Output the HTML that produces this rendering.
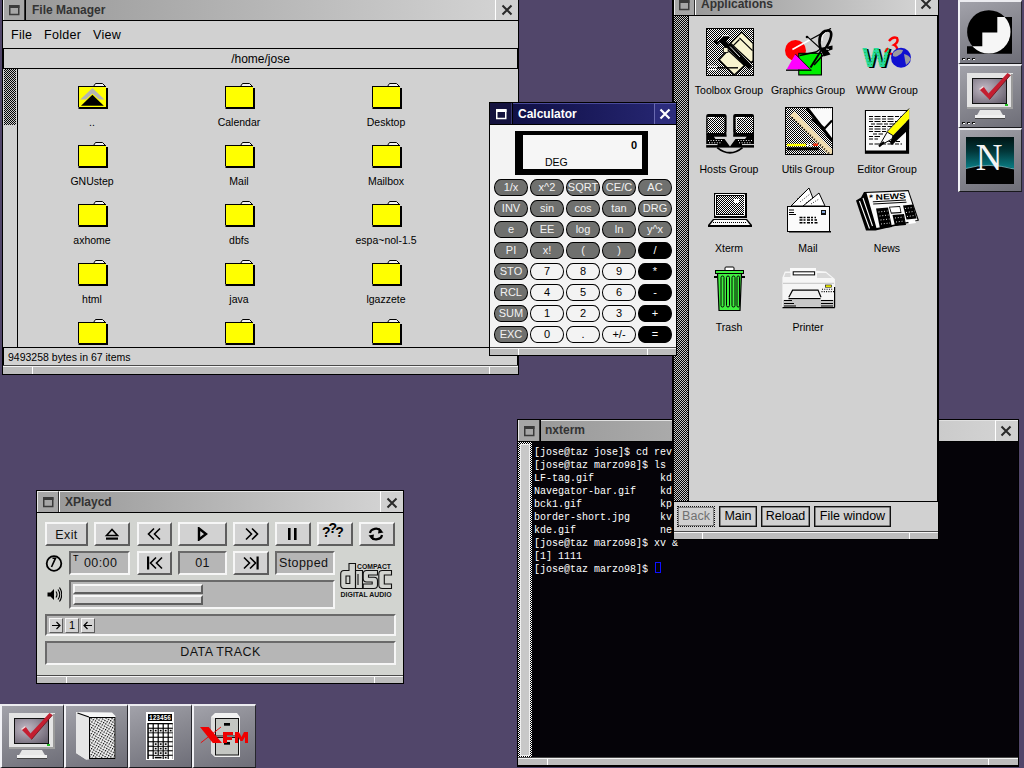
<!DOCTYPE html>
<html><head><meta charset="utf-8">
<style>
*{margin:0;padding:0;box-sizing:border-box}
html,body{width:1024px;height:768px;overflow:hidden}
body{position:relative;background:#51466a;font-family:"Liberation Sans",sans-serif;color:#000}
.a{position:absolute}
.blk{background:#000}
.tb{background:linear-gradient(90deg,#9a9a9a,#d2d2d2)}
.tbtn{background:#a6a6a6;border-left:1px solid #e8e8e8;border-right:1px solid #303030}
.ttl{font-weight:bold;font-size:12px;color:#333;white-space:nowrap;line-height:1}
.winico{border:1.5px solid #3a3a3a;border-top-width:3px}
.cls{background:#d0d0d0;border-left:1px solid #fff}
.chk{background:repeating-conic-gradient(#000 0 25%,#c8c8c8 0 50%) 0 0/2px 2px}
.lbl{font-size:10.5px;white-space:nowrap;line-height:1;text-align:center}
.cb{width:34px;height:17px;border:1px solid #000;border-radius:7px/8.5px;font-size:11px;line-height:15px;text-align:center;white-space:nowrap}
.abtn{height:21px;border:1px solid #111;box-shadow:inset 0 0 0 0.5px #333;font-size:12.5px;line-height:19px;text-align:center;white-space:nowrap;background:#d1d1d1}
.rz{background:#d2d2d2;border:2px solid;border-color:#f6f6f6 #5e5e5e #5e5e5e #f6f6f6}
.sk{background:#b6b6b6;border:2px solid;border-color:#6a6a6a #f6f6f6 #f6f6f6 #6a6a6a}
.cdt{font-size:12.5px;line-height:1;letter-spacing:0.4px;white-space:nowrap;color:#111}
.tile{width:64px;height:64px;background:linear-gradient(160deg,#a2a2aa,#8a8a92 45%,#6e6e78);border-top:2px solid #ececf0;border-left:2px solid #f2f2f6;border-right:1px solid #26262c;border-bottom:1px solid #18181c}
.rsz{background:#bdbdbd;border-top:1px solid #f4f4f4;box-shadow:0 -1px 0 #4a4a4a}
</style></head><body>

<!-- ============ FILE MANAGER ============ -->
<div class="a blk" style="left:2px;top:-1px;width:517px;height:376px"></div>
<div class="a tbtn" style="left:3px;top:0;width:22px;height:20px"></div>
<svg class="a" style="left:9px;top:5px" width="11" height="11"><rect x="0.75" y="1" width="9" height="8.5" fill="none" stroke="#3a3a3a" stroke-width="1.5"/><rect x="0" y="0" width="10.5" height="3" fill="#3a3a3a"/></svg>
<div class="a tb" style="left:26px;top:0;width:469px;height:20px"></div>
<div class="a ttl" style="left:32px;top:4px">File Manager</div>
<div class="a cls" style="left:495px;top:0;width:23px;height:20px"></div>
<div class="a" style="left:501px;top:2px;width:12px;height:12px">
 <svg width="12" height="12"><path d="M1.5 1.5L10.5 10.5M10.5 1.5L1.5 10.5" stroke="#2a2a2a" stroke-width="2"/></svg></div>
<!-- menu -->
<div class="a" style="left:3px;top:21px;width:515px;height:27px;background:#d1d1d1"></div>
<div class="a" style="left:11px;top:29px;font-size:12.5px;letter-spacing:0.3px;line-height:1">File</div>
<div class="a" style="left:44px;top:29px;font-size:12.5px;letter-spacing:0.3px;line-height:1">Folder</div>
<div class="a" style="left:93px;top:29px;font-size:12.5px;letter-spacing:0.3px;line-height:1">View</div>
<!-- path -->
<div class="a" style="left:4px;top:49px;width:513px;height:19px;background:#d1d1d1"></div>
<div class="a" style="left:3px;top:53px;width:515px;text-align:center;font-size:12px;line-height:1">/home/jose</div>
<!-- content -->
<div class="a" style="left:3px;top:69px;width:14px;height:278px;background:#d0d0d0"></div>
<div class="a chk" style="left:4px;top:69px;width:12px;height:56px"></div>
<div class="a" style="left:18px;top:69px;width:500px;height:278px;background:#d1d1d1"></div>
<svg class="a" style="left:78px;top:83px" width="31" height="27"><path d="M15.5 3.5L17.5 0.5H24.5L27.5 3.5Z" fill="#f4f4f4" stroke="#000"/><rect x="0" y="3" width="28" height="21" fill="#000"/><rect x="1" y="4" width="27" height="20" fill="#ff0"/><rect x="28" y="5" width="2" height="21" fill="#000"/><rect x="0.5" y="24" width="29.5" height="2" fill="#000"/><path d="M2.3 16.5L14.4 5L26.5 16.5H21L14.4 10.6L7.8 16.5Z" fill="#b4b4b4"/><path d="M3 22.7L14.4 11.8L25.8 22.7Z" fill="#000"/></svg>
<div class="a lbl" style="left:42px;top:117px;width:100px">..</div>
<svg class="a" style="left:225px;top:83px" width="31" height="27"><path d="M15.5 3.5L17.5 0.5H24.5L27.5 3.5Z" fill="#f4f4f4" stroke="#000"/><rect x="0" y="3" width="28" height="21" fill="#000"/><rect x="1" y="4" width="27" height="20" fill="#ff0"/><rect x="28" y="5" width="2" height="21" fill="#000"/><rect x="0.5" y="24" width="29.5" height="2" fill="#000"/></svg>
<div class="a lbl" style="left:189px;top:117px;width:100px">Calendar</div>
<svg class="a" style="left:372px;top:83px" width="31" height="27"><path d="M15.5 3.5L17.5 0.5H24.5L27.5 3.5Z" fill="#f4f4f4" stroke="#000"/><rect x="0" y="3" width="28" height="21" fill="#000"/><rect x="1" y="4" width="27" height="20" fill="#ff0"/><rect x="28" y="5" width="2" height="21" fill="#000"/><rect x="0.5" y="24" width="29.5" height="2" fill="#000"/></svg>
<div class="a lbl" style="left:336px;top:117px;width:100px">Desktop</div>
<svg class="a" style="left:78px;top:142px" width="31" height="27"><path d="M15.5 3.5L17.5 0.5H24.5L27.5 3.5Z" fill="#f4f4f4" stroke="#000"/><rect x="0" y="3" width="28" height="21" fill="#000"/><rect x="1" y="4" width="27" height="20" fill="#ff0"/><rect x="28" y="5" width="2" height="21" fill="#000"/><rect x="0.5" y="24" width="29.5" height="2" fill="#000"/></svg>
<div class="a lbl" style="left:42px;top:176px;width:100px">GNUstep</div>
<svg class="a" style="left:225px;top:142px" width="31" height="27"><path d="M15.5 3.5L17.5 0.5H24.5L27.5 3.5Z" fill="#f4f4f4" stroke="#000"/><rect x="0" y="3" width="28" height="21" fill="#000"/><rect x="1" y="4" width="27" height="20" fill="#ff0"/><rect x="28" y="5" width="2" height="21" fill="#000"/><rect x="0.5" y="24" width="29.5" height="2" fill="#000"/></svg>
<div class="a lbl" style="left:189px;top:176px;width:100px">Mail</div>
<svg class="a" style="left:372px;top:142px" width="31" height="27"><path d="M15.5 3.5L17.5 0.5H24.5L27.5 3.5Z" fill="#f4f4f4" stroke="#000"/><rect x="0" y="3" width="28" height="21" fill="#000"/><rect x="1" y="4" width="27" height="20" fill="#ff0"/><rect x="28" y="5" width="2" height="21" fill="#000"/><rect x="0.5" y="24" width="29.5" height="2" fill="#000"/></svg>
<div class="a lbl" style="left:336px;top:176px;width:100px">Mailbox</div>
<svg class="a" style="left:78px;top:201px" width="31" height="27"><path d="M15.5 3.5L17.5 0.5H24.5L27.5 3.5Z" fill="#f4f4f4" stroke="#000"/><rect x="0" y="3" width="28" height="21" fill="#000"/><rect x="1" y="4" width="27" height="20" fill="#ff0"/><rect x="28" y="5" width="2" height="21" fill="#000"/><rect x="0.5" y="24" width="29.5" height="2" fill="#000"/></svg>
<div class="a lbl" style="left:42px;top:235px;width:100px">axhome</div>
<svg class="a" style="left:225px;top:201px" width="31" height="27"><path d="M15.5 3.5L17.5 0.5H24.5L27.5 3.5Z" fill="#f4f4f4" stroke="#000"/><rect x="0" y="3" width="28" height="21" fill="#000"/><rect x="1" y="4" width="27" height="20" fill="#ff0"/><rect x="28" y="5" width="2" height="21" fill="#000"/><rect x="0.5" y="24" width="29.5" height="2" fill="#000"/></svg>
<div class="a lbl" style="left:189px;top:235px;width:100px">dbfs</div>
<svg class="a" style="left:372px;top:201px" width="31" height="27"><path d="M15.5 3.5L17.5 0.5H24.5L27.5 3.5Z" fill="#f4f4f4" stroke="#000"/><rect x="0" y="3" width="28" height="21" fill="#000"/><rect x="1" y="4" width="27" height="20" fill="#ff0"/><rect x="28" y="5" width="2" height="21" fill="#000"/><rect x="0.5" y="24" width="29.5" height="2" fill="#000"/></svg>
<div class="a lbl" style="left:336px;top:235px;width:100px">espa~nol-1.5</div>
<svg class="a" style="left:78px;top:260px" width="31" height="27"><path d="M15.5 3.5L17.5 0.5H24.5L27.5 3.5Z" fill="#f4f4f4" stroke="#000"/><rect x="0" y="3" width="28" height="21" fill="#000"/><rect x="1" y="4" width="27" height="20" fill="#ff0"/><rect x="28" y="5" width="2" height="21" fill="#000"/><rect x="0.5" y="24" width="29.5" height="2" fill="#000"/></svg>
<div class="a lbl" style="left:42px;top:294px;width:100px">html</div>
<svg class="a" style="left:225px;top:260px" width="31" height="27"><path d="M15.5 3.5L17.5 0.5H24.5L27.5 3.5Z" fill="#f4f4f4" stroke="#000"/><rect x="0" y="3" width="28" height="21" fill="#000"/><rect x="1" y="4" width="27" height="20" fill="#ff0"/><rect x="28" y="5" width="2" height="21" fill="#000"/><rect x="0.5" y="24" width="29.5" height="2" fill="#000"/></svg>
<div class="a lbl" style="left:189px;top:294px;width:100px">java</div>
<svg class="a" style="left:372px;top:260px" width="31" height="27"><path d="M15.5 3.5L17.5 0.5H24.5L27.5 3.5Z" fill="#f4f4f4" stroke="#000"/><rect x="0" y="3" width="28" height="21" fill="#000"/><rect x="1" y="4" width="27" height="20" fill="#ff0"/><rect x="28" y="5" width="2" height="21" fill="#000"/><rect x="0.5" y="24" width="29.5" height="2" fill="#000"/></svg>
<div class="a lbl" style="left:336px;top:294px;width:100px">lgazzete</div>
<svg class="a" style="left:78px;top:319px" width="31" height="27"><path d="M15.5 3.5L17.5 0.5H24.5L27.5 3.5Z" fill="#f4f4f4" stroke="#000"/><rect x="0" y="3" width="28" height="21" fill="#000"/><rect x="1" y="4" width="27" height="20" fill="#ff0"/><rect x="28" y="5" width="2" height="21" fill="#000"/><rect x="0.5" y="24" width="29.5" height="2" fill="#000"/></svg>
<svg class="a" style="left:225px;top:319px" width="31" height="27"><path d="M15.5 3.5L17.5 0.5H24.5L27.5 3.5Z" fill="#f4f4f4" stroke="#000"/><rect x="0" y="3" width="28" height="21" fill="#000"/><rect x="1" y="4" width="27" height="20" fill="#ff0"/><rect x="28" y="5" width="2" height="21" fill="#000"/><rect x="0.5" y="24" width="29.5" height="2" fill="#000"/></svg>
<svg class="a" style="left:372px;top:319px" width="31" height="27"><path d="M15.5 3.5L17.5 0.5H24.5L27.5 3.5Z" fill="#f4f4f4" stroke="#000"/><rect x="0" y="3" width="28" height="21" fill="#000"/><rect x="1" y="4" width="27" height="20" fill="#ff0"/><rect x="28" y="5" width="2" height="21" fill="#000"/><rect x="0.5" y="24" width="29.5" height="2" fill="#000"/></svg>
<!-- status -->
<div class="a" style="left:4px;top:348px;width:513px;height:16.5px;background:#d1d1d1"></div>
<div class="a" style="left:8px;top:352px;font-size:10.5px;line-height:1">9493258 bytes in 67 items</div>
<div class="a rsz" style="left:3px;top:366px;width:515px;height:8px"></div>
<div class="a" style="left:32px;top:367px;width:1px;height:7px;background:#fff"></div>
<div class="a" style="left:489px;top:367px;width:1px;height:7px;background:#fff"></div>

<div class="a blk" style="left:517px;top:419px;width:502px;height:348px"></div>
<div class="a tbtn" style="left:518px;top:420px;width:22px;height:21px"></div>
<svg class="a" style="left:524px;top:426px" width="11" height="11"><rect x="0.75" y="1" width="9" height="8.5" fill="none" stroke="#3a3a3a" stroke-width="1.5"/><rect x="0" y="0" width="10.5" height="3" fill="#3a3a3a"/></svg>
<div class="a tb" style="left:541px;top:420px;width:454px;height:21px;border-top:1px solid #e0e0e0"></div>
<div class="a ttl" style="left:545px;top:424px">nxterm</div>
<div class="a cls" style="left:995px;top:420px;width:23px;height:21px;border-top:1px solid #f0f0f0"></div>
<svg class="a" style="left:1000px;top:425px" width="12" height="12"><path d="M1.5 1.5L10.5 10.5M10.5 1.5L1.5 10.5" stroke="#2a2a2a" stroke-width="2"/></svg>
<div class="a" style="left:532px;top:442px;width:486px;height:316px;background:#050308"></div>
<div class="a" style="left:518px;top:442px;width:14px;height:316px;background:repeating-conic-gradient(#000 0 25%,#fff 0 50%) 0 0/2px 2px"></div>
<div class="a" style="left:521px;top:445px;width:8px;height:310px;background:#c8c8c8;box-shadow:0 0 0 1px #f0f0f0"></div>
<pre class="a" style="left:534px;top:446px;font-family:'Liberation Mono',monospace;font-size:10px;line-height:13px;color:#fff;margin:0">[jose@taz jose]$ cd revista
[jose@taz marzo98]$ ls
LF-tag.gif           kde
Navegator-bar.gif    kde
bck1.gif             kpa
border-short.jpg     kvi
kde.gif              net
[jose@taz marzo98]$ xv &
[1] 1111
[jose@taz marzo98]$ </pre>
<div class="a" style="left:655px;top:562px;width:6px;height:11px;border:1px solid #1010ff"></div>
<div class="a rsz" style="left:518px;top:758px;width:500px;height:7px"></div>
<div class="a" style="left:547px;top:759px;width:1px;height:6px;background:#fff"></div>
<div class="a" style="left:988px;top:759px;width:1px;height:6px;background:#fff"></div>
<div class="a blk" style="left:672px;top:-6px;width:267px;height:546px"></div>
<div class="a tbtn" style="left:674px;top:-5px;width:21px;height:20px"></div>
<svg class="a" style="left:679px;top:0px" width="11" height="11"><rect x="0.75" y="1" width="9" height="8.5" fill="none" stroke="#3a3a3a" stroke-width="1.5"/><rect x="0" y="0" width="10.5" height="3" fill="#3a3a3a"/></svg>
<div class="a tb" style="left:695px;top:-5px;width:221px;height:20px;border-left:1px solid #fff"></div>
<div class="a ttl" style="left:701px;top:-2px">Applications</div>
<div class="a cls" style="left:915px;top:-5px;width:23px;height:20px"></div>
<svg class="a" style="left:920px;top:-2px" width="12" height="12"><path d="M1.5 1.5L10.5 10.5M10.5 1.5L1.5 10.5" stroke="#2a2a2a" stroke-width="2"/></svg>
<div class="a chk" style="left:674px;top:16px;width:14px;height:485px"></div>
<div class="a" style="left:689px;top:16px;width:248px;height:485px;background:#d1d1d1"></div>
<svg class="a" style="left:706px;top:28px" width="48" height="48"><defs><pattern id="c1" width="2" height="2" patternUnits="userSpaceOnUse"><rect width="2" height="2" fill="#fff"/><rect width="1" height="1" fill="#000"/><rect x="1" y="1" width="1" height="1" fill="#000"/></pattern></defs><rect width="48" height="48" fill="#000"/><rect x="1" y="1" width="46" height="46" fill="url(#c1)"/><path d="M35.6 3.2L47 14.6V34L45 35.5L23.5 15.3Z" fill="#000"/><path d="M35.6 5L46.5 15.8V32.5L45 33.5L25.5 15.3Z" fill="#f8f4d0"/><path d="M33.4 9.9L46.5 22.6M27 17.9L33.4 11.5" stroke="#000" stroke-width="1.3" fill="none"/><path d="M12 31.8L22.1 21.3L39.5 37.6L28.3 48Z" fill="#000"/><path d="M14 31.8L22.1 23.3L37.5 37.6L28.3 46Z" fill="#f8f4d0"/><path d="M17.4 19.4H22.1V24.5H17.4Z" fill="#f8f4d0" stroke="#000" stroke-width="0.8"/><path d="M21.7 17.2L44.4 39.8" stroke="#000" stroke-width="4.6"/><path d="M24 18.5L34 29" stroke="#fff" stroke-width="0.9"/><path d="M7 13.5L11 17L14 14L20 20L24 17L20 13L24 9.5L22.5 8H16L10 12Z" fill="#000"/><path d="M11.5 13.5L17.4 7.7H22.5" stroke="#fff" stroke-width="1" fill="none"/><path d="M2 38.3H11M2 41.6H11" stroke="#fff" stroke-width="1.1"/><path d="M11 39.8H32" stroke="#000" stroke-width="1.4"/></svg>
<svg class="a" style="left:785px;top:28px" width="50" height="50"><circle cx="10.5" cy="22.4" r="10.5" fill="#f00"/><rect x="13.2" y="24.8" width="23.8" height="22.7" fill="#000"/><rect x="14.3" y="25.9" width="21.6" height="20.5" fill="#00f000"/><path d="M1.6 41.6L10.3 26L25.7 41.6Z" fill="#f0f"/><path d="M1 42.2H26.5" stroke="#000" stroke-width="1.3"/><path d="M10.3 26L25.7 41.6" stroke="#000" stroke-width="0.9"/><path d="M14.7 27.6L31 24L37 20" stroke="#000" stroke-width="1.5" fill="none"/><path d="M7.4 21.5L25 11.7" stroke="#fff" stroke-width="1.6"/><path d="M25 11.7L46 0.4" stroke="#000" stroke-width="1.3"/><circle cx="22" cy="9" r="1.3" fill="#000"/><path d="M22 8.4L36.5 21.5" stroke="#000" stroke-width="1.1"/><path d="M35.5 21Q32 7 40 3Q47.5 1 46 8.5Q45 14 39.5 22" stroke="#000" stroke-width="2.6" fill="none"/><path d="M37 13Q37 6 41 4.5" stroke="#fff" stroke-width="0.9" fill="none"/><path d="M35 20L47.5 17.5V21.5L43 23L45.5 26.5L38.5 28.5Z" fill="#000"/><path d="M41 21L44 21.5" stroke="#fff" stroke-width="0.8"/><path d="M36.5 22L25.5 39.5" stroke="#000" stroke-width="2"/><path d="M38 27L29 37" stroke="#000" stroke-width="1.6"/></svg>
<svg class="a" style="left:858px;top:34px" width="56" height="38"><defs><pattern id="wd" width="3" height="3" patternUnits="userSpaceOnUse"><rect width="3" height="3" fill="#28d8a0"/><rect width="1" height="1" fill="#10c030"/></pattern></defs><text x="5.5" y="34.5" font-family="Liberation Sans" font-weight="bold" font-size="27" fill="#000" transform="scale(1.08,1)">W</text><text x="4" y="33.5" font-family="Liberation Sans" font-weight="bold" font-size="27" fill="url(#wd)" transform="scale(1.08,1)">W</text><path d="M31 7Q35 2 39 4Q41 8 36 11Q41 13 38 19Q35 22 32 19" stroke="#f00" stroke-width="2.4" fill="none"/><path d="M27 18L30 14" stroke="#f00" stroke-width="2"/><circle cx="43" cy="23.8" r="10" fill="#1010d0"/><path d="M35 19Q39 14 45 16Q44 20 41 21Q38 24 35 22Z" fill="#9a9aa0"/><path d="M46 20Q51 21 53 25Q51 29 48 31L47 26Z" fill="#9a9aa0"/></svg>
<svg class="a" style="left:706px;top:112px" width="48" height="44"><defs><pattern id="c2" width="2" height="2" patternUnits="userSpaceOnUse"><rect width="2" height="2" fill="#fff"/><rect width="1" height="1" fill="#000"/><rect x="1" y="1" width="1" height="1" fill="#000"/></pattern></defs><path d="M0.2 4Q0.2 2 2.2 2H18.6Q20.6 2 20.6 4V23H0.2Z" fill="#000"/><rect x="1.5" y="5" width="17" height="16" fill="url(#c2)"/><path d="M1.5 5.5H8" stroke="#fff" stroke-width="1"/><path d="M27.2 4Q27.2 2 29.2 2H46Q48 2 48 4V23H27.2Z" fill="#000"/><rect x="29.8" y="5" width="17.2" height="16" fill="url(#c2)"/><path d="M30.3 5V17M30 5.5H39" stroke="#fff" stroke-width="1"/><rect x="0.2" y="22.5" width="47.8" height="13.1" fill="#000"/><path d="M20.6 20H27.2V24.8H40.7L39 27H29.5L24 34.5L18.5 27H9.5L7.9 24.8H20.6Z" fill="#d1d1d1"/><path d="M2 28.5H16M32 28.5H46M3 30.8H15M33 30.8H45" stroke="#fff" stroke-width="1" stroke-dasharray="1 1.6"/><path d="M0.2 32.6H11.5M36 32.6H48" stroke="#fff" stroke-width="0.9"/><path d="M11.2 35.6Q24 46 36.5 35.6" stroke="#000" stroke-width="1.8" fill="none"/></svg>
<svg class="a" style="left:785px;top:107px" width="48" height="48"><defs><pattern id="c3" width="2" height="2" patternUnits="userSpaceOnUse"><rect width="2" height="2" fill="#fff"/><rect width="1" height="1" fill="#000"/><rect x="1" y="1" width="1" height="1" fill="#000"/></pattern></defs><rect width="48" height="48" fill="#000"/><rect x="1" y="1" width="46" height="46" fill="url(#c3)"/><path d="M22.7 1.2H47V33Z" fill="#fafafa"/><path d="M22 1L47 33.5" stroke="#000" stroke-width="3"/><path d="M27 12.5L39.5 21.5L47 13.5" stroke="#000" stroke-width="2.2" fill="none"/><path d="M4.9 8.5L9.2 4.5L47 42.4V46.8H42.4Z" fill="#f0dcb0"/><path d="M7 10.5L44 46.5" stroke="#000" stroke-width="2" stroke-dasharray="0.9 1.9"/><rect x="1.9" y="36.8" width="19" height="2.4" fill="#ff0"/><rect x="22" y="36.5" width="1.6" height="3" fill="#fff"/><rect x="25" y="36.5" width="1.6" height="3" fill="#fff"/><rect x="28.2" y="36.5" width="4.8" height="2.5" fill="#f03010"/><rect x="1.9" y="40.3" width="31.8" height="3" fill="#000"/></svg>
<svg class="a" style="left:864px;top:108px" width="48" height="48"><rect x="0.9" y="2" width="44.2" height="43.8" fill="#000"/><rect x="2" y="3" width="40" height="39.5" fill="#fafafa"/><path d="M5 8.5H38M5 11H30M5 13.5H34M7 16H31M5 18.5H28M5 21H24M5 23.5H22M9 26H19M5 28.5H16M5 31H14M19 33.5H36M5 36H38" stroke="#000" stroke-width="1" stroke-dasharray="4 1.5 6 1.5"/><path d="M45.1 1V11L29 27.6L23.2 24Z" fill="#ff0"/><path d="M45.1 0.5L22.8 23.8" stroke="#000" stroke-width="0.9"/><path d="M45.1 11V21L28 37L26 35L29 27.6Z" fill="#000"/><path d="M23.2 24L29 27.6L28 31L15.2 38Z" fill="#fafafa" stroke="#000" stroke-width="1"/><path d="M15 38.5L20 34" stroke="#000" stroke-width="2.2"/></svg>
<svg class="a" style="left:707px;top:192px" width="46" height="36"><defs><pattern id="c4" width="2" height="2" patternUnits="userSpaceOnUse"><rect width="2" height="2" fill="#fff"/><rect width="1" height="1" fill="#000"/><rect x="1" y="1" width="1" height="1" fill="#000"/></pattern></defs><rect x="7" y="1" width="33" height="25" fill="#000"/><path d="M8.5 2.5H37.5V23.5H8.5Z" stroke="#fff" stroke-width="1" fill="none"/><rect x="10" y="4" width="27" height="18" fill="url(#c4)"/><rect x="27" y="7" width="5" height="4" fill="#fff"/><path d="M6 27H40L45 33V35H1V33Z" fill="#000"/><path d="M7 28H39L43 33H3Z" fill="#fafafa"/><path d="M6 30.5H40" stroke="#000" stroke-width="1.2" stroke-dasharray="1 1"/></svg>
<svg class="a" style="left:786px;top:187px" width="46" height="46"><path d="M5 19L23 1L30 19Z" fill="#fff" stroke="#000" stroke-width="1"/><path d="M17 19L33 6L39 19Z" fill="#fff" stroke="#000" stroke-width="1"/><path d="M11 12L20 4M14 15L24 7M20 16L28 10M25 17L33 12" stroke="#000" stroke-width="0.8" stroke-dasharray="1 1.5"/><rect x="1" y="19" width="43" height="26" fill="#000"/><rect x="2" y="20" width="41" height="24" fill="#fbfbfb"/><rect x="3" y="44" width="42" height="1.5" fill="#000"/><rect x="35" y="23" width="5" height="5" fill="#111"/><rect x="36" y="24" width="3" height="2" fill="#8ad"/><path d="M3 23H8M3 25.5H8M3 27.5H10" stroke="#000" stroke-width="1"/><path d="M13.5 30.5H30M13.5 33H31M13.5 35.7H32" stroke="#000" stroke-width="1.4" stroke-dasharray="3 1 2 1.5"/></svg>
<svg class="a" style="left:855px;top:189px" width="66" height="44"><path d="M1 11.5L6 8.5L9 3L53.6 1L64 31.5L20.5 41.5L11 41.5Z" fill="#000"/><path d="M11.5 4L53 2.2L62.5 31L21.5 39Z" fill="#fafafa"/><path d="M4.5 12L14.5 39.5M8 9L17.5 37" stroke="#fff" stroke-width="1.1"/><text x="14" y="10.5" font-family="Liberation Sans" font-weight="bold" font-size="8" textLength="37" lengthAdjust="spacingAndGlyphs" fill="#000" transform="rotate(-3 30 8)">* NEWS</text><path d="M17.8 12.8L51 11M18.2 15L51.5 13.2" stroke="#000" stroke-width="1"/><path d="M21 19.5L33 18.5L37 38L25 39.5Z" fill="#000"/><path d="M34 17.8L45 17L46.5 24L36 24.8Z" fill="#000"/><path d="M35 18.5L44.5 18L45.5 23L36.5 23.5Z" fill="#fff"/><path d="M37.5 26L49 25L51 36L40 37Z" fill="#000"/><path d="M48 16.5L58 15.5L61.5 29.5L51.5 30.5Z" fill="#000"/><path d="M53 32L60 31L61 34L54 35Z" fill="#fff"/><path d="M23.5 23L32.5 22M24.5 27L33.5 26M25.5 31L34.5 30M26 35L35 34M40 29L48.5 28M41 33L49.5 32M50 19.5L57.5 18.5M51 23.5L58.5 22.5M52 27.5L59.5 26.5" stroke="#fff" stroke-width="0.9" stroke-dasharray="1 1.8"/></svg>
<svg class="a" style="left:714px;top:266px" width="32" height="46"><rect x="11" y="1" width="9" height="4" rx="1" fill="#fff" stroke="#000" stroke-width="1"/><rect x="1.5" y="4.5" width="28" height="3" fill="#40f040" stroke="#000" stroke-width="1"/><path d="M3.5 7.5H27.5L26 44.5H5Z" fill="#40f040" stroke="#000" stroke-width="1.2"/><path d="M0 11H3M28 11H31" stroke="#000" stroke-width="2"/><rect x="7" y="10" width="3" height="31" rx="1.5" fill="none" stroke="#000" stroke-width="1"/><rect x="12.5" y="10" width="3" height="31" rx="1.5" fill="none" stroke="#000" stroke-width="1"/><rect x="18" y="10" width="3" height="31" rx="1.5" fill="none" stroke="#000" stroke-width="1"/><rect x="23" y="10" width="2.5" height="31" rx="1.2" fill="none" stroke="#000" stroke-width="1"/></svg>
<svg class="a" style="left:782px;top:267px" width="54" height="43"><path d="M8 4V1H34V4Z" fill="#fafafa"/><path d="M0.4 10.6L2.8 4.5H8V3.8H34L44 4.5L52.9 12V40.4H0.4Z" fill="#f6f6f6"/><path d="M2 10L3.5 6H8.5V10Z" fill="#d8d8d8"/><path d="M35 6H44L50 11H35Z" fill="#d8d8d8"/><rect x="11.2" y="4.8" width="21.4" height="3.1" fill="#fff" stroke="#000" stroke-width="1"/><path d="M1 16.3H52" stroke="#c4c4c4" stroke-width="1"/><rect x="1" y="32.9" width="51.5" height="7" fill="#c8c8c8"/><path d="M6.8 30.2L10.6 23.1H36L39 30.2" stroke="#000" stroke-width="1.2" fill="#eeeeee"/><path d="M6.5 31.6H38.5" stroke="#000" stroke-width="1.2"/><path d="M2 33.5H10M2 36.5H12M2 39H14M39 33.5H51M39 36.5H51M39 39H51" stroke="#000" stroke-width="1"/><path d="M0.5 40.6H52.8" stroke="#000" stroke-width="1.3"/><path d="M52.6 20V40.5" stroke="#000" stroke-width="1.2"/><rect x="43.4" y="18" width="6.1" height="2.2" fill="#ff0" stroke="#000" stroke-width="0.6"/><path d="M40 22.3H51.5M39.5 24.6H52" stroke="#000" stroke-width="1.1" stroke-dasharray="1 1.3"/></svg>
<div class="a lbl" style="left:679px;top:85px;width:100px">Toolbox Group</div>
<div class="a lbl" style="left:758px;top:85px;width:100px">Graphics Group</div>
<div class="a lbl" style="left:837px;top:85px;width:100px">WWW Group</div>
<div class="a lbl" style="left:679px;top:164px;width:100px">Hosts Group</div>
<div class="a lbl" style="left:758px;top:164px;width:100px">Utils Group</div>
<div class="a lbl" style="left:837px;top:164px;width:100px">Editor Group</div>
<div class="a lbl" style="left:679px;top:243px;width:100px">Xterm</div>
<div class="a lbl" style="left:758px;top:243px;width:100px">Mail</div>
<div class="a lbl" style="left:837px;top:243px;width:100px">News</div>
<div class="a lbl" style="left:679px;top:322px;width:100px">Trash</div>
<div class="a lbl" style="left:758px;top:322px;width:100px">Printer</div>
<div class="a" style="left:674px;top:502px;width:264px;height:30px;background:#d1d1d1"></div>
<div class="a abtn" style="left:677px;top:506px;width:38px;border:1px dotted #111;color:#707070">Back</div>
<div class="a abtn" style="left:719px;top:506px;width:38px">Main</div>
<div class="a abtn" style="left:761px;top:506px;width:49px">Reload</div>
<div class="a abtn" style="left:814px;top:506px;width:77px">File window</div>
<div class="a rsz" style="left:674px;top:532px;width:264px;height:7px"></div>
<div class="a" style="left:702px;top:533px;width:1px;height:6px;background:#fff"></div>
<div class="a" style="left:909px;top:533px;width:1px;height:6px;background:#fff"></div>
<div class="a blk" style="left:489px;top:102px;width:188px;height:254px"></div>
<div class="a" style="left:490px;top:103px;width:22px;height:21px;background:#14123e;border-right:1px solid #3a3a70"></div>
<svg class="a" style="left:496px;top:109px" width="11" height="11"><rect x="0.75" y="1" width="9" height="8.5" fill="none" stroke="#fff" stroke-width="1.5"/><rect x="0" y="0" width="10.5" height="3" fill="#fff"/></svg>
<div class="a" style="left:513px;top:103px;width:141px;height:21px;background:linear-gradient(90deg,#101046,#24246e);border-top:1px solid #4a4a9a"></div>
<div class="a ttl" style="left:518px;top:108px;color:#fff;font-size:12px">Calculator</div>
<div class="a" style="left:654px;top:103px;width:22px;height:21px;background:#2c2c7c;border-left:1px solid #6a6ab0;border-top:1px solid #5a5aa8"></div>
<svg class="a" style="left:659px;top:108px" width="12" height="12"><path d="M1.5 1.5L10.5 10.5M10.5 1.5L1.5 10.5" stroke="#fff" stroke-width="2.2"/></svg>
<div class="a" style="left:490px;top:125px;width:186px;height:223px;background:#f3f3f3"></div>
<div class="a blk" style="left:515px;top:131px;width:133px;height:44px"></div>
<div class="a" style="left:523px;top:135px;width:119px;height:34px;background:#f6f6f6"></div>
<div class="a" style="left:599px;top:139.5px;width:38px;text-align:right;font-weight:bold;font-size:11px;line-height:1">0</div>
<div class="a" style="left:545px;top:157px;font-size:10.5px;line-height:1">DEG</div>
<div class="a cb" style="left:494px;top:179px;background:#6f706e;color:#f2f2f2">1/x</div>
<div class="a cb" style="left:530px;top:179px;background:#6f706e;color:#f2f2f2">x^2</div>
<div class="a cb" style="left:566px;top:179px;background:#6f706e;color:#f2f2f2">SQRT</div>
<div class="a cb" style="left:602px;top:179px;background:#6f706e;color:#f2f2f2">CE/C</div>
<div class="a cb" style="left:638px;top:179px;background:#6f706e;color:#f2f2f2">AC</div>
<div class="a cb" style="left:494px;top:200px;background:#6f706e;color:#f2f2f2">INV</div>
<div class="a cb" style="left:530px;top:200px;background:#6f706e;color:#f2f2f2">sin</div>
<div class="a cb" style="left:566px;top:200px;background:#6f706e;color:#f2f2f2">cos</div>
<div class="a cb" style="left:602px;top:200px;background:#6f706e;color:#f2f2f2">tan</div>
<div class="a cb" style="left:638px;top:200px;background:#6f706e;color:#f2f2f2">DRG</div>
<div class="a cb" style="left:494px;top:221px;background:#6f706e;color:#f2f2f2">e</div>
<div class="a cb" style="left:530px;top:221px;background:#6f706e;color:#f2f2f2">EE</div>
<div class="a cb" style="left:566px;top:221px;background:#6f706e;color:#f2f2f2">log</div>
<div class="a cb" style="left:602px;top:221px;background:#6f706e;color:#f2f2f2">ln</div>
<div class="a cb" style="left:638px;top:221px;background:#6f706e;color:#f2f2f2">y^x</div>
<div class="a cb" style="left:494px;top:242px;background:#6f706e;color:#f2f2f2">PI</div>
<div class="a cb" style="left:530px;top:242px;background:#6f706e;color:#f2f2f2">x!</div>
<div class="a cb" style="left:566px;top:242px;background:#6f706e;color:#f2f2f2">(</div>
<div class="a cb" style="left:602px;top:242px;background:#6f706e;color:#f2f2f2">)</div>
<div class="a cb" style="left:638px;top:242px;background:#000;color:#fff">/</div>
<div class="a cb" style="left:494px;top:263px;background:#6f706e;color:#f2f2f2">STO</div>
<div class="a cb" style="left:530px;top:263px;background:#f3f3f3;color:#000">7</div>
<div class="a cb" style="left:566px;top:263px;background:#f3f3f3;color:#000">8</div>
<div class="a cb" style="left:602px;top:263px;background:#f3f3f3;color:#000">9</div>
<div class="a cb" style="left:638px;top:263px;background:#000;color:#fff">*</div>
<div class="a cb" style="left:494px;top:284px;background:#6f706e;color:#f2f2f2">RCL</div>
<div class="a cb" style="left:530px;top:284px;background:#f3f3f3;color:#000">4</div>
<div class="a cb" style="left:566px;top:284px;background:#f3f3f3;color:#000">5</div>
<div class="a cb" style="left:602px;top:284px;background:#f3f3f3;color:#000">6</div>
<div class="a cb" style="left:638px;top:284px;background:#000;color:#fff">-</div>
<div class="a cb" style="left:494px;top:305px;background:#6f706e;color:#f2f2f2">SUM</div>
<div class="a cb" style="left:530px;top:305px;background:#f3f3f3;color:#000">1</div>
<div class="a cb" style="left:566px;top:305px;background:#f3f3f3;color:#000">2</div>
<div class="a cb" style="left:602px;top:305px;background:#f3f3f3;color:#000">3</div>
<div class="a cb" style="left:638px;top:305px;background:#000;color:#fff">+</div>
<div class="a cb" style="left:494px;top:326px;background:#6f706e;color:#f2f2f2">EXC</div>
<div class="a cb" style="left:530px;top:326px;background:#f3f3f3;color:#000">0</div>
<div class="a cb" style="left:566px;top:326px;background:#f3f3f3;color:#000">.</div>
<div class="a cb" style="left:602px;top:326px;background:#f3f3f3;color:#000">+/-</div>
<div class="a cb" style="left:638px;top:326px;background:#000;color:#fff">=</div>
<div class="a rsz" style="left:490px;top:348px;width:186px;height:7px"></div>
<div class="a" style="left:518px;top:349px;width:1px;height:6px;background:#fff"></div>
<div class="a" style="left:647px;top:349px;width:1px;height:6px;background:#fff"></div>
<div class="a blk" style="left:36px;top:490px;width:368px;height:194px"></div>
<div class="a tbtn" style="left:37px;top:491px;width:22px;height:21px;border-top:1px solid #e8e8e8"></div>
<svg class="a" style="left:43px;top:497px" width="11" height="11"><rect x="0.75" y="1" width="9" height="8.5" fill="none" stroke="#3a3a3a" stroke-width="1.5"/><rect x="0" y="0" width="10.5" height="3" fill="#3a3a3a"/></svg>
<div class="a tb" style="left:59px;top:491px;width:322px;height:21px;border-left:1px solid #fff;border-top:1px solid #e8e8e8"></div>
<div class="a ttl" style="left:65px;top:496px">XPlaycd</div>
<div class="a cls" style="left:380px;top:491px;width:23px;height:21px;border-top:1px solid #e8e8e8"></div>
<svg class="a" style="left:386px;top:497px" width="12" height="12"><path d="M1.5 1.5L10.5 10.5M10.5 1.5L1.5 10.5" stroke="#2a2a2a" stroke-width="2"/></svg>
<div class="a" style="left:37px;top:513px;width:366px;height:162px;background:#d2d4d0"></div>
<div class="a rz" style="left:45px;top:522px;width:43px;height:24px;"></div>
<div class="a rz" style="left:94px;top:522px;width:36px;height:24px;"></div>
<div class="a rz" style="left:137px;top:522px;width:35px;height:24px;"></div>
<div class="a rz" style="left:178px;top:522px;width:49px;height:24px;"></div>
<div class="a rz" style="left:233px;top:522px;width:36px;height:24px;"></div>
<div class="a rz" style="left:275px;top:522px;width:36px;height:24px;"></div>
<div class="a rz" style="left:317px;top:522px;width:36px;height:24px;"></div>
<div class="a rz" style="left:359px;top:522px;width:36px;height:24px;"></div>
<div class="a cdt" style="left:45px;top:528.5px;width:43px;text-align:center">Exit</div>
<svg class="a" style="left:104px;top:526px" width="16" height="16"><path d="M2.5 9.5L8 3.5L13.5 9.5Z" stroke="#000" stroke-width="1.6" fill="none"/><rect x="2" y="11.5" width="12" height="2.2" fill="#000"/></svg>
<svg class="a" style="left:146px;top:526px" width="18" height="16"><path d="M8 2.5L2.5 8L8 13.5M14 2.5L8.5 8L14 13.5" stroke="#000" fill="none" stroke-width="1.6"/></svg>
<svg class="a" style="left:196px;top:527px" width="12" height="14"><path d="M3 1.5L10 7L3 12.5Z" stroke="#000" stroke-width="2.4" fill="none"/></svg>
<svg class="a" style="left:243px;top:526px" width="18" height="16"><path d="M3 2.5L8.5 8L3 13.5M9 2.5L14.5 8L9 13.5" stroke="#000" fill="none" stroke-width="1.6"/></svg>
<svg class="a" style="left:286px;top:527px" width="14" height="14"><rect x="2" y="1" width="2.6" height="12" fill="#000"/><rect x="8" y="1" width="2.6" height="12" fill="#000"/></svg>
<div class="a" style="left:322px;top:525px;font-weight:bold;font-size:14px;line-height:1;letter-spacing:-2px">?<span style="position:relative;top:-4px">?</span>?</div>
<svg class="a" style="left:366px;top:526px" width="20" height="16"><path d="M4 7A6 5 0 0 1 15 5M16 9A6 5 0 0 1 5 11" stroke="#000" stroke-width="2.2" fill="none"/><path d="M13 2L17.5 6.5L12 7.5Z M7 14L2.5 9.5L8 8.5Z" fill="#000"/></svg>
<svg class="a" style="left:45px;top:555px" width="18" height="18"><circle cx="9" cy="8.5" r="7.3" stroke="#000" stroke-width="1.8" fill="none"/><path d="M7.5 3.2H10.5L6.5 12" stroke="#000" stroke-width="1.6" fill="none"/></svg>
<div class="a sk" style="left:69px;top:551px;width:61px;height:24px;"></div>
<div class="a" style="left:73px;top:554px;font-size:9px;line-height:1">T</div>
<div class="a cdt" style="left:84px;top:557px;">00:00</div>
<div class="a rz" style="left:137px;top:551px;width:35px;height:24px;"></div>
<svg class="a" style="left:145px;top:555px" width="20" height="16"><rect x="2" y="1.5" width="2.2" height="13" fill="#000"/><path d="M11 2.5L5.5 8L11 13.5M17 2.5L11.5 8L17 13.5" stroke="#000" fill="none" stroke-width="1.6"/></svg>
<div class="a sk" style="left:178px;top:551px;width:49px;height:24px;"></div>
<div class="a cdt" style="left:178px;top:557px;width:49px;text-align:center">01</div>
<div class="a rz" style="left:233px;top:551px;width:36px;height:24px;"></div>
<svg class="a" style="left:241px;top:555px" width="20" height="16"><path d="M3 2.5L8.5 8L3 13.5M9 2.5L14.5 8L9 13.5" stroke="#000" fill="none" stroke-width="1.6"/><rect x="15.5" y="1.5" width="2.2" height="13" fill="#000"/></svg>
<div class="a sk" style="left:275px;top:551px;width:60px;height:24px;"></div>
<div class="a cdt" style="left:279px;top:557px;">Stopped</div>
<svg class="a" style="left:340px;top:561px" width="54" height="38"><text x="17" y="7.5" font-family="Liberation Sans" font-weight="bold" font-size="7.6" textLength="34" lengthAdjust="spacingAndGlyphs" fill="#111">COMPACT</text><g fill="none" stroke="#111" stroke-width="1.1"><path d="M9 2.5H15.5V27.5H4Q0.7 27.5 0.7 24V13Q0.7 9.5 4 9.5H9Z"/><path d="M6 15H9.8V22.5H6Z"/><path d="M15.5 9.5H22.5V27.5H15.5Z"/><path d="M18 13V24"/><path d="M26.5 9.5H37.5V14H28.5V16.3H34Q37.5 16.3 37.5 19.8V24Q37.5 27.5 34 27.5H23.2V23H32.2V21H26.7Q23.2 21 23.2 17.5V13Q23.2 9.5 26.5 9.5Z"/><path d="M42.2 9.5H51.5V14H44.3V23H51.5V27.5H42.2Q38.8 27.5 38.8 24V13Q38.8 9.5 42.2 9.5Z"/></g><text x="0.6" y="35.5" font-family="Liberation Sans" font-weight="bold" font-size="7" textLength="51" lengthAdjust="spacingAndGlyphs" fill="#111">DIGITAL AUDIO</text></svg>
<svg class="a" style="left:46px;top:586px" width="16" height="17"><path d="M1.5 6.5H4.5L8 3V14L4.5 10.5H1.5Z" fill="#000"/><path d="M10 5.5Q12 8.5 10 11.5M12 3.5Q15.5 8.5 12 13.5M13.5 1.5Q18 8.5 13.5 15.5" stroke="#000" stroke-width="1.1" fill="none"/></svg>
<div class="a sk" style="left:69px;top:580px;width:266px;height:29px;"></div>
<div class="a rz" style="left:73px;top:584px;width:130px;height:10px;"></div>
<div class="a rz" style="left:73px;top:595px;width:130px;height:10px;"></div>
<div class="a sk" style="left:45px;top:614px;width:351px;height:22px;"></div>
<div class="a rz" style="left:49px;top:618px;width:14px;height:15px;border-width:1.5px"></div>
<div class="a rz" style="left:65px;top:618px;width:14px;height:15px;border-width:1.5px"></div>
<div class="a rz" style="left:81px;top:618px;width:14px;height:15px;border-width:1.5px"></div>
<svg class="a" style="left:49px;top:618px" width="14" height="15"><path d="M3 7.5H11M7.5 4L11 7.5L7.5 11" stroke="#000" stroke-width="1.2" fill="none"/></svg>
<div class="a" style="left:65px;top:620px;width:14px;text-align:center;font-size:11px;line-height:1;color:#000">1</div>
<svg class="a" style="left:81px;top:618px" width="14" height="15"><path d="M11 7.5H3M6.5 4L3 7.5L6.5 11" stroke="#000" stroke-width="1.2" fill="none"/></svg>
<div class="a sk" style="left:45px;top:641px;width:351px;height:24px;"></div>
<div class="a cdt" style="left:45px;top:646px;width:351px;text-align:center">DATA TRACK</div>
<div class="a" style="left:37px;top:675px;width:366px;height:1px;background:#505050"></div>
<div class="a rsz" style="left:37px;top:676px;width:366px;height:7px"></div>
<div class="a" style="left:66px;top:677px;width:1px;height:6px;background:#fff"></div>
<div class="a" style="left:374px;top:677px;width:1px;height:6px;background:#fff"></div>
<div class="a tile" style="left:958px;top:0px"></div>
<div class="a tile" style="left:958px;top:64px"></div>
<div class="a tile" style="left:958px;top:128px"></div>
<div class="a tile" style="left:0px;top:704px"></div>
<div class="a tile" style="left:64px;top:704px"></div>
<div class="a tile" style="left:128px;top:704px"></div>
<div class="a tile" style="left:192px;top:704px"></div>
<svg class="a" style="left:966px;top:9px" width="48" height="48"><defs><clipPath id="gc"><circle cx="22.8" cy="22.9" r="21.7"/></clipPath></defs><path d="M31.3 8H46V44.8H1V37.2H31.3Z" fill="#000"/><circle cx="22.8" cy="22.9" r="21.7" fill="#000"/><path d="M31.3 8H60V60H-10V37.2H16.3V23.5H31.3Z" fill="#f6f6f6" clip-path="url(#gc)"/></svg>
<div class="a" style="left:962px;top:58px;width:3px;height:2px;background:#fff;border-left:1px solid #111;border-top:1px solid #111"></div>
<div class="a" style="left:962px;top:122px;width:3px;height:2px;background:#fff;border-left:1px solid #111;border-top:1px solid #111"></div>
<div class="a" style="left:967px;top:58px;width:3px;height:2px;background:#fff;border-left:1px solid #111;border-top:1px solid #111"></div>
<div class="a" style="left:967px;top:122px;width:3px;height:2px;background:#fff;border-left:1px solid #111;border-top:1px solid #111"></div>
<div class="a" style="left:972px;top:58px;width:3px;height:2px;background:#fff;border-left:1px solid #111;border-top:1px solid #111"></div>
<div class="a" style="left:972px;top:122px;width:3px;height:2px;background:#fff;border-left:1px solid #111;border-top:1px solid #111"></div>
<svg class="a" style="left:967px;top:73px" width="46" height="46"><defs><radialGradient id="scra" cx="0.35" cy="0.4" r="0.8"><stop offset="0" stop-color="#c0b8c4"/><stop offset="1" stop-color="#6a6270"/></radialGradient></defs><rect x="0" y="0" width="46" height="36" fill="#e4e4e4"/><rect x="44" y="1" width="2" height="35" fill="#9a9a9a"/><rect x="0" y="34" width="46" height="2" fill="#a0a0a0"/><rect x="5" y="5" width="35" height="26" fill="#111"/><rect x="6" y="6" width="33" height="24" fill="url(#scra)"/><rect x="38" y="31" width="3" height="2" fill="#20c020"/><path d="M9 44L13 37H33L37 44Z" fill="#e8e8e8"/><rect x="8" y="42" width="30" height="3" fill="#f0f0f0"/><rect x="8" y="45" width="30" height="1" fill="#444"/><path d="M12.5 16.5L16.5 13.5L21.5 20.5L40.5 0L43.5 2L22.5 26.5Z" fill="#c41e30"/><path d="M12.5 16.5L16.5 13.5" stroke="#f4dede" stroke-width="1.4"/><path d="M22.5 26.5L43.5 2" stroke="#6a1018" stroke-width="0.8"/></svg>
<svg class="a" style="left:9px;top:713px" width="46" height="46"><defs><radialGradient id="scrb" cx="0.35" cy="0.4" r="0.8"><stop offset="0" stop-color="#c0b8c4"/><stop offset="1" stop-color="#6a6270"/></radialGradient></defs><rect x="0" y="0" width="46" height="36" fill="#e4e4e4"/><rect x="44" y="1" width="2" height="35" fill="#9a9a9a"/><rect x="0" y="34" width="46" height="2" fill="#a0a0a0"/><rect x="5" y="5" width="35" height="26" fill="#111"/><rect x="6" y="6" width="33" height="24" fill="url(#scrb)"/><rect x="38" y="31" width="3" height="2" fill="#20c020"/><path d="M9 44L13 37H33L37 44Z" fill="#e8e8e8"/><rect x="8" y="42" width="30" height="3" fill="#f0f0f0"/><rect x="8" y="45" width="30" height="1" fill="#444"/><path d="M12.5 16.5L16.5 13.5L21.5 20.5L40.5 0L43.5 2L22.5 26.5Z" fill="#c41e30"/><path d="M12.5 16.5L16.5 13.5" stroke="#f4dede" stroke-width="1.4"/><path d="M22.5 26.5L43.5 2" stroke="#6a1018" stroke-width="0.8"/></svg>
<svg class="a" style="left:966px;top:137px" width="48" height="47"><defs><linearGradient id="ns" x1="0" y1="0" x2="0" y2="1"><stop offset="0" stop-color="#001414"/><stop offset="0.3" stop-color="#023638"/><stop offset="0.68" stop-color="#0a8088"/></linearGradient></defs><rect width="48" height="47" fill="url(#ns)"/><path d="M0 31.5Q22 25 48 32V47H0Z" fill="#030303"/><path d="M0 31.5Q22 25 48 32" stroke="#8fd0d8" stroke-width="0.7" fill="none"/><text x="23" y="33" text-anchor="middle" font-family="Liberation Serif" font-size="37" fill="#f4f4f4">N</text></svg>
<svg class="a" style="left:76px;top:712px" width="42" height="48"><defs><pattern id="dots" width="2.6" height="2.6" patternUnits="userSpaceOnUse" patternTransform="rotate(30)"><rect width="2.6" height="2.6" fill="#f4f4f4"/><rect width="1.3" height="1.3" fill="#000"/></pattern></defs><path d="M0 0L36 0.5L39.5 4V47H13L10 47.5L0 41Z" fill="#f6f6f6"/><path d="M0 0L13 5V47.5L10 47.5L0 41Z" fill="#e6e6e6"/><rect x="13" y="5" width="26.5" height="42" fill="#000"/><rect x="14" y="6" width="24.5" height="40" fill="url(#dots)"/><path d="M1.5 1L13 5" stroke="#000" stroke-width="1.3"/></svg>
<svg class="a" style="left:146px;top:712px" width="28" height="48"><rect width="28" height="48" fill="#fff"/><rect x="2" y="2" width="24" height="7" fill="#000"/><text x="14" y="8.3" text-anchor="middle" font-family="Liberation Mono" font-weight="bold" font-size="7" textLength="22" lengthAdjust="spacingAndGlyphs" fill="#fff">123456</text><rect x="1.3" y="11" width="25.5" height="36" fill="#000"/><rect x="2.8" y="12.3" width="3.8" height="3.4" fill="#fff"/><rect x="7.8" y="12.3" width="3.8" height="3.4" fill="#fff"/><rect x="12.8" y="12.3" width="3.8" height="3.4" fill="#fff"/><rect x="17.8" y="12.3" width="3.8" height="3.4" fill="#fff"/><rect x="22.8" y="12.3" width="3.8" height="3.4" fill="#fff"/><rect x="3.3" y="17.3" width="2.8" height="2.6" fill="none" stroke="#fff" stroke-width="1"/><rect x="8.3" y="17.3" width="2.8" height="2.6" fill="none" stroke="#fff" stroke-width="1"/><rect x="13.3" y="17.3" width="2.8" height="2.6" fill="none" stroke="#fff" stroke-width="1"/><rect x="18.3" y="17.3" width="2.8" height="2.6" fill="none" stroke="#fff" stroke-width="1"/><rect x="23.3" y="17.3" width="2.8" height="2.6" fill="none" stroke="#fff" stroke-width="1"/><rect x="2.8" y="21.3" width="3.8" height="3.4" fill="#fff"/><rect x="7.8" y="21.3" width="3.8" height="3.4" fill="#fff"/><rect x="12.8" y="21.3" width="3.8" height="3.4" fill="#fff"/><rect x="17.8" y="21.3" width="3.8" height="3.4" fill="#fff"/><rect x="22.8" y="21.3" width="3.8" height="3.4" fill="#fff"/><rect x="2.8" y="25.8" width="3.8" height="3.4" fill="#fff"/><rect x="7.8" y="25.8" width="3.8" height="3.4" fill="#fff"/><rect x="12.8" y="25.8" width="3.8" height="3.4" fill="#fff"/><rect x="17.8" y="25.8" width="3.8" height="3.4" fill="#fff"/><rect x="22.8" y="25.8" width="3.8" height="3.4" fill="#fff"/><rect x="2.8" y="30.3" width="3.8" height="3.4" fill="#fff"/><rect x="8.3" y="30.8" width="2.8" height="2.6" fill="none" stroke="#fff" stroke-width="1"/><rect x="13.3" y="30.8" width="2.8" height="2.6" fill="none" stroke="#fff" stroke-width="1"/><rect x="18.3" y="30.8" width="2.8" height="2.6" fill="none" stroke="#fff" stroke-width="1"/><rect x="22.8" y="30.3" width="3.8" height="3.4" fill="#fff"/><rect x="2.8" y="34.8" width="3.8" height="3.4" fill="#fff"/><rect x="8.3" y="35.3" width="2.8" height="2.6" fill="none" stroke="#fff" stroke-width="1"/><rect x="13.3" y="35.3" width="2.8" height="2.6" fill="none" stroke="#fff" stroke-width="1"/><rect x="18.3" y="35.3" width="2.8" height="2.6" fill="none" stroke="#fff" stroke-width="1"/><rect x="22.8" y="34.8" width="3.8" height="3.4" fill="#fff"/><rect x="2.8" y="39.3" width="3.8" height="3.4" fill="#fff"/><rect x="8.3" y="39.8" width="2.8" height="2.6" fill="none" stroke="#fff" stroke-width="1"/><rect x="13.3" y="39.8" width="2.8" height="2.6" fill="none" stroke="#fff" stroke-width="1"/><rect x="18.3" y="39.8" width="2.8" height="2.6" fill="none" stroke="#fff" stroke-width="1"/><rect x="22.8" y="39.3" width="3.8" height="3.4" fill="#fff"/><rect x="2.8" y="43.8" width="3.8" height="3.4" fill="#fff"/><rect x="8.3" y="44.3" width="7.8" height="2.6" fill="none" stroke="#fff" stroke-width="1"/><rect x="18.3" y="44.3" width="2.8" height="2.6" fill="none" stroke="#fff" stroke-width="1"/><rect x="22.8" y="43.8" width="3.8" height="3.4" fill="#fff"/></svg>
<svg class="a" style="left:200px;top:713px" width="50" height="46"><path d="M11 4L15 0H37L40 4V44L15 44L11 40Z" fill="#f2f2f2"/><path d="M11 4L15 5V44L11 40Z" fill="#dcdcdc"/><rect x="15" y="5" width="24" height="18.5" fill="#111"/><rect x="16" y="6" width="22" height="16.5" fill="#c4c6c2"/><rect x="15" y="24" width="24" height="18.5" fill="#111"/><rect x="16" y="25" width="22" height="16.5" fill="#c4c6c2"/><rect x="24" y="10" width="6" height="2.7" fill="#000"/><rect x="24" y="29" width="6" height="2.7" fill="#000"/><path d="M0 14H8.7L22 30H12.8Z" fill="#f00000"/><path d="M0.8 29.8L21 14" stroke="#f00000" stroke-width="0.9"/><path d="M23 19H33V22H27V24H32V27H27V30H23Z" fill="#f00000"/><path d="M35 19H39L41.5 24L44 19H48V30H45V24L42.5 28H40.5L38 24V30H35Z" fill="#f00000"/></svg>
</body></html>
